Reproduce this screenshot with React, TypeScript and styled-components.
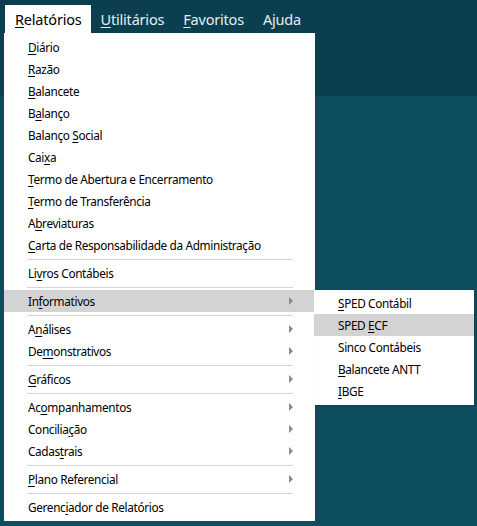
import React from "react";
import styled, { createGlobalStyle } from "styled-components";

const Global = createGlobalStyle`
  html, body { margin: 0; padding: 0; }
  body { font-family: "Noto Sans", "Open Sans", sans-serif; }
`;

const Page = styled.div`
  width: 477px;
  height: 526px;
  overflow: hidden;
  background: linear-gradient(to bottom, #0b3f4f 0, #0b3f4f 96px, #0e4d5e 96px, #0e4d5e 100%);
  position: relative;
`;

const MenuBar = styled.div`
  display: flex;
  align-items: stretch;
  height: 28px;
  padding: 5px 0 0 5px;
`;

const BarItem = styled.div<{ $active?: boolean }>`
  position: relative;
  display: flex;
  align-items: center;
  padding: 0 9px 1px 10px;
  font-size: 14.5px;
  letter-spacing: -0.2px;
  color: ${(p) => (p.$active ? "#000" : "#e6eef1")};
  background: ${(p) => (p.$active ? "#ffffff" : "transparent")};
`;

const Key = styled.span`
  text-decoration: underline;
  text-decoration-thickness: 1px;
  text-underline-offset: 2px;
`;

const Dropdown = styled.div`
  position: absolute;
  top: 28px;
  left: -1px;
  width: 311px;
  background: #ffffff;
  padding: 3px 0;
  display: flex;
  flex-direction: column;
  z-index: 2;
  letter-spacing: -0.35px;
`;

const Item = styled.div<{ $hover?: boolean }>`
  position: relative;
  height: 22px;
  display: flex;
  align-items: center;
  padding-left: 24px;
  font-size: 11.8px;
  color: #000;
  background: ${(p) => (p.$hover ? "#d3d3d3" : "transparent")};
  white-space: nowrap;
`;

const Separator = styled.div`
  height: 1px;
  margin: 3px 22px 2px 23px;
  background: #d5d5d5;
`;

const Arrow = styled.span`
  position: absolute;
  right: 22px;
  top: 50%;
  margin-top: -4px;
  width: 0;
  height: 0;
  border-top: 4px solid transparent;
  border-bottom: 4px solid transparent;
  border-left: 4px solid #8a8a8a;
`;

const Submenu = styled.div`
  position: absolute;
  left: 310px;
  top: 0;
  width: 160px;
  background: #ffffff;
  padding: 2px 0 3px;
  display: flex;
  flex-direction: column;
  box-shadow: 1px 1px 2px rgba(0, 0, 0, 0.2);
`;

const SubItem = styled(Item)`
  padding-left: 24px;
`;

type Entry =
  | { sep: true }
  | { pre: string; key: string; post: string; arrow?: boolean; hover?: boolean; sub?: boolean };

const L = (
  pre: string,
  key: string,
  post: string,
  arrow = false,
  extra: Partial<{ hover: boolean; sub: boolean }> = {}
): Entry => ({ pre, key, post, arrow, ...extra });

const entries: Entry[] = [
  L("", "D", "iário"),
  L("", "R", "azão"),
  L("", "B", "alancete"),
  L("B", "a", "lanço"),
  L("Balanço ", "S", "ocial"),
  L("Cai", "x", "a"),
  L("", "T", "ermo de Abertura e Encerramento"),
  L("", "T", "ermo de Transferência"),
  L("A", "b", "reviaturas"),
  L("", "C", "arta de Responsabilidade da Administração"),
  { sep: true },
  L("Li", "v", "ros Contábeis"),
  { sep: true },
  L("In", "f", "ormativos", true, { hover: true, sub: true }),
  { sep: true },
  L("A", "n", "álises", true),
  L("De", "m", "onstrativos", true),
  { sep: true },
  L("", "G", "ráficos", true),
  { sep: true },
  L("Ac", "o", "mpanhamentos", true),
  L("Concilia", "ç", "ão", true),
  L("Cadas", "t", "rais", true),
  { sep: true },
  L("", "P", "lano Referencial", true),
  { sep: true },
  L("Gerenc", "i", "ador de Relatórios"),
];

const subEntries = [
  { pre: "", key: "S", post: "PED Contábil" },
  { pre: "SPED ", key: "E", post: "CF", hover: true },
  { pre: "Sinco Contábeis", key: "", post: "" },
  { pre: "", key: "B", post: "alancete ANTT" },
  { pre: "", key: "I", post: "BGE" },
];

const Label = ({ pre, k, post }: { pre: string; k: string; post: string }) => (
  <span>
    {pre}
    {k && <Key>{k}</Key>}
    {post}
  </span>
);

export default function App() {
  return (
    <>
      <Global />
      <Page>
        <MenuBar>
          <BarItem $active>
            <Label pre="" k="R" post="elatórios" />
            <Dropdown>
              {entries.map((e, i) =>
                "sep" in e ? (
                  <Separator key={i} />
                ) : (
                  <Item key={i} $hover={e.hover}>
                    <Label pre={e.pre} k={e.key} post={e.post} />
                    {e.arrow && <Arrow />}
                    {e.sub && (
                      <Submenu>
                        {subEntries.map((s, j) => (
                          <SubItem key={j} $hover={s.hover}>
                            <Label pre={s.pre} k={s.key} post={s.post} />
                          </SubItem>
                        ))}
                      </Submenu>
                    )}
                  </Item>
                )
              )}
            </Dropdown>
          </BarItem>
          <BarItem>
            <Label pre="" k="U" post="tilitários" />
          </BarItem>
          <BarItem>
            <Label pre="" k="F" post="avoritos" />
          </BarItem>
          <BarItem>
            <Label pre="Ajuda" k="" post="" />
          </BarItem>
        </MenuBar>
      </Page>
    </>
  );
}
